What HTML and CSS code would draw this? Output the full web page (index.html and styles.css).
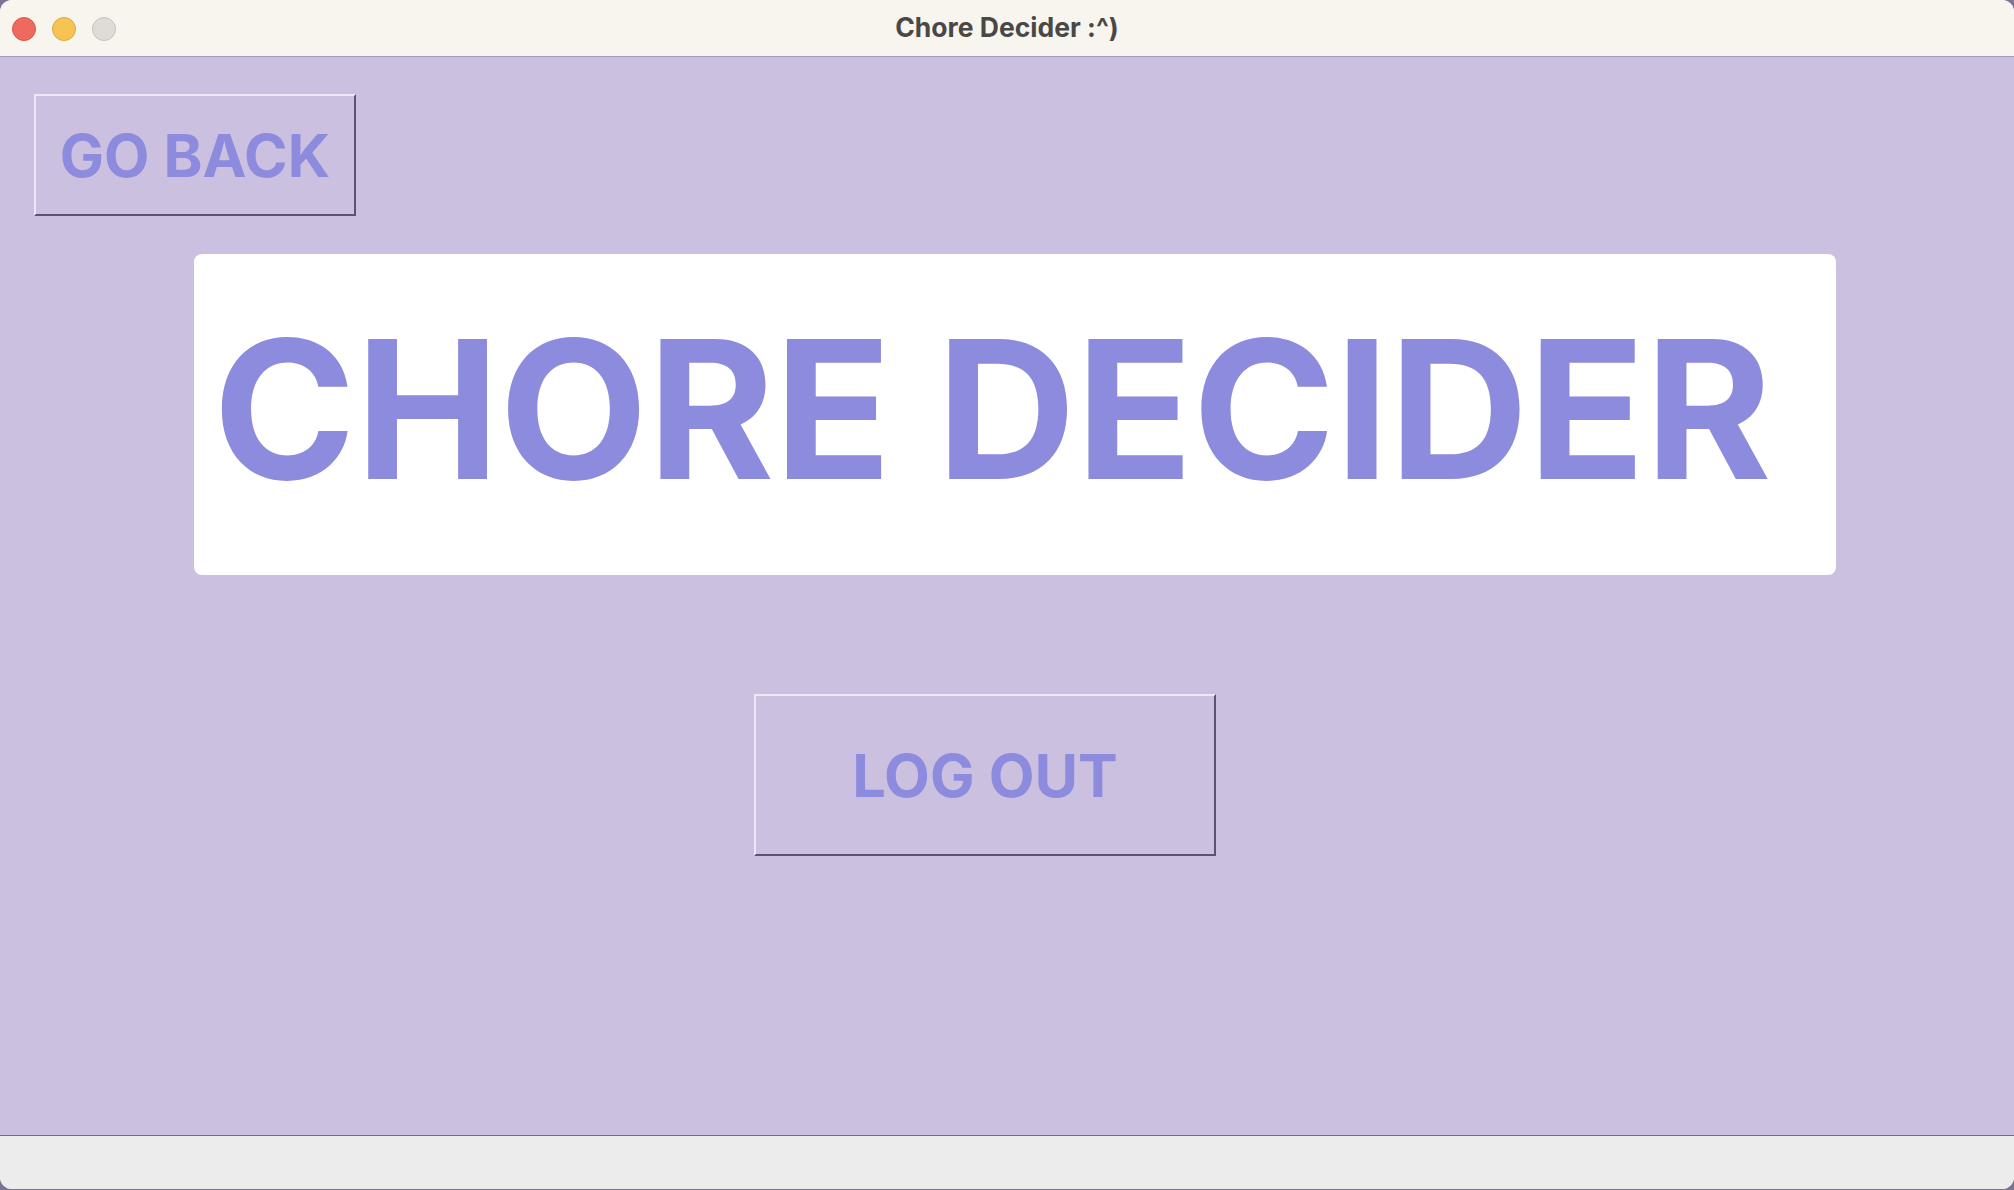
FILE: index.html
```html
<!DOCTYPE html>
<html>
<head>
<meta charset="utf-8">
<link rel="stylesheet" href="styles.css">
</head>
<body>
<div class="window">
  <div class="titlebar">
    <div class="lights">
      <span class="light red"></span>
      <span class="light yellow"></span>
      <span class="light gray"></span>
    </div>
    <div class="title">Chore Decider :^)</div>
  </div>
  <div class="content">
    <div class="back-row">
      <button class="btn btn-back">GO BACK</button>
    </div>
    <div class="header-card">
      <h1 class="heading">CHORE DECIDER</h1>
    </div>
    <div class="logout-row">
      <button class="btn btn-logout">LOG OUT</button>
    </div>
  </div>
  <div class="statusbar"></div>
</div>
</body>
</html>
```
FILE: styles.css
```css
html, body {
  margin: 0;
  padding: 0;
  width: 2014px;
  height: 1190px;
  overflow: hidden;
  background: #7d7394;
}

.window {
  width: 2014px;
  height: 1189px;
  display: flex;
  flex-direction: column;
  background: #ececec;
  border-radius: 12px;
  overflow: hidden;
  font-family: Inter, "Liberation Sans", sans-serif;
}

.titlebar {
  height: 56px;
  flex: 0 0 56px;
  background: #f8f5ef;
  border-bottom: 1px solid #a79bbd;
  display: flex;
  align-items: center;
  position: relative;
}

.lights {
  display: flex;
  gap: 16px;
  padding-left: 12px;
  padding-top: 1px;
}

.light {
  width: 24px;
  height: 24px;
  border-radius: 50%;
  box-sizing: border-box;
  display: block;
}

.red { background: #ee6a5f; border: 1px solid #d8544a; }
.yellow { background: #f6c452; border: 1px solid #dca83c; }
.gray { background: #dfdcd7; border: 1px solid #c6c2bc; }

.title {
  position: absolute;
  left: 0;
  right: 0;
  top: 0;
  height: 56px;
  line-height: 54px;
  text-align: center;
  font-size: 26.5px;
  font-weight: 700;
  color: #4a4846;
}

.content {
  flex: 1;
  background: #cbc0e0;
  display: flex;
  flex-direction: column;
  border-bottom: 1px solid #707070;
}

.back-row {
  padding: 37px 0 0 34px;
}

.btn {
  background: #cbc0e0;
  border-style: solid;
  border-width: 2px;
  border-color: #eee8f6 #5c5370 #5c5370 #eee8f6;
  color: #8d8bde;
  font-family: Inter, "Liberation Sans", sans-serif;
  font-weight: 700;
  padding: 0;
  margin: 0;
  display: flex;
  align-items: center;
  justify-content: center;
  box-sizing: border-box;
}

.btn-back {
  width: 322px;
  height: 122px;
  font-size: 59px;
}

.header-card {
  margin: 38px 0 0 194px;
  width: 1642px;
  height: 321px;
  background: #ffffff;
  border-radius: 8px;
  display: flex;
  align-items: center;
  padding-left: 19px;
  padding-bottom: 10px;
  box-sizing: border-box;
}

.heading {
  margin: 0;
  font-size: 193px;
  font-weight: 700;
  color: #8d8bde;
  line-height: 1;
  letter-spacing: -0.3px;
  white-space: nowrap;
}

.logout-row {
  padding: 119px 0 0 754px;
}

.btn-logout {
  width: 462px;
  height: 162px;
  font-size: 59.5px;
}

.statusbar {
  flex: 0 0 53px;
  background: #ececec;
}
```
